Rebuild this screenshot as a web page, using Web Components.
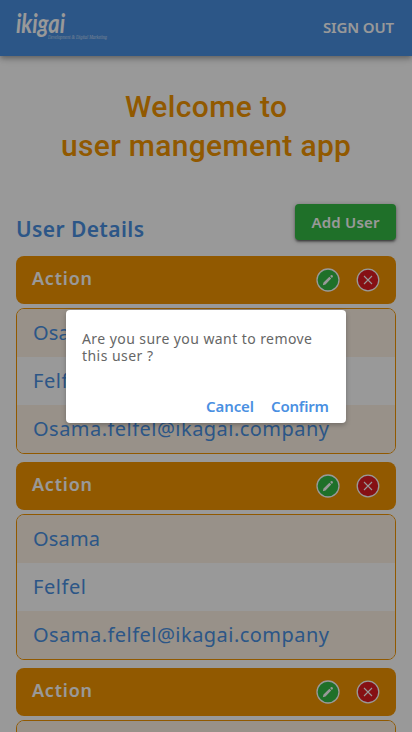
<!DOCTYPE html>
<html lang="en">
<head>
<meta charset="utf-8">
<meta name="viewport" content="width=device-width">
<title>User management</title>
<style>
html,body{margin:0;height:100%;overflow:hidden;background:#fff}
body{font-family:"Noto Sans","Open Sans",sans-serif;color:#4a90e2}
</style>
</head>
<body>
<user-app></user-app>
<script>
const define = (name, html, ready) => {
  const template = document.createElement('template');
  template.innerHTML = html;
  customElements.define(name, class extends HTMLElement {
    connectedCallback() {
      if (this.shadowRoot) return;
      this.attachShadow({mode: 'open'}).append(template.content.cloneNode(true));
      if (ready) ready(this);
    }
  });
};

// Spreads a line of text over a given width with letter-spacing.
define('spaced-text', `<style>:host{display:inline-block;white-space:nowrap}span{display:inline-block}</style><span><slot></slot></span>`, el => {
  const span = el.shadowRoot.querySelector('span');
  span.style.letterSpacing = '0';
  const natural = span.getBoundingClientRect().width;
  const gap = (Number(el.getAttribute('width')) - natural) / (el.textContent.length - 1);
  span.style.letterSpacing = gap.toFixed(3) + 'px';
  span.style.marginRight = (-gap).toFixed(3) + 'px';
});

define('brand-logo', `<style>
:host{display:block;width:94px;height:36px}
svg{display:block;overflow:visible}
text{font-family:"Lato","Open Sans",sans-serif;font-style:italic;fill:#fff}
.tag{font-family:"Liberation Serif",serif}
</style>
<svg width="94" height="36" viewBox="0 0 94 36">
<text x="0" y="23" font-size="27" font-weight="700" textLength="49" lengthAdjust="spacingAndGlyphs">ikigai</text>
<text class="tag" x="32" y="29" font-size="5.5" opacity=".65" textLength="59" lengthAdjust="spacingAndGlyphs">Development &amp; Digital Marketing</text>
</svg>`);

define('app-header', `<style>
:host{display:flex;justify-content:space-between;align-items:center;height:56px;box-sizing:border-box;padding:0 18px 0 16px;background:#4a90e2;color:#fff;box-shadow:0 2px 4px -1px rgba(0,0,0,.2),0 4px 5px rgba(0,0,0,.14),0 1px 10px rgba(0,0,0,.12)}
.out{font-size:15px;font-weight:600;line-height:20px;padding-bottom:2px}
</style><brand-logo></brand-logo><spaced-text class="out" width="71">SIGN OUT</spaced-text>`);

define('page-title', `<style>
:host{display:flex;flex-direction:column;align-items:center;padding-top:31px;font:500 30px/39px Roboto,sans-serif;color:#f29400}
</style><spaced-text width="162">Welcome to</spaced-text><spaced-text width="290">user mangement app</spaced-text>`);

define('raised-button', `<style>
:host{display:flex;align-items:center;justify-content:center;width:101px;height:36px;box-sizing:border-box;padding-bottom:1px;border-radius:4px;background:#34bb45;color:#fff;font-size:15px;font-weight:600;line-height:20px;box-shadow:0 3px 1px -2px rgba(0,0,0,.2),0 2px 2px rgba(0,0,0,.3),0 1px 5px rgba(0,0,0,.3)}
</style><slot></slot>`);

define('round-icon', `<style>
:host{display:block;width:24px;height:24px}svg{display:block}
:host([kind=edit]) .remove,:host([kind=remove]) .edit{display:none}
</style>
<svg width="24" height="24" viewBox="0 0 24 24">
<g class="edit"><circle cx="12" cy="12" r="11" fill="#34bb45" stroke="#fff" stroke-width="1.3"/>
<path d="M6.8 17.2 7.5 14.4 13.4 8.8 15.2 10.6 9.5 16.4Z M14.1 8.1 15 7.2Q15.7 6.7 16.3 7.2L16.8 7.7Q17.2 8.3 16.7 9L15.9 9.9Z" fill="#fff"/></g>
<g class="remove"><circle cx="12" cy="12" r="10.8" fill="#e01b22" stroke="#fff" stroke-width="1.3"/>
<path d="M8 8 16 16M16 8 8 16" fill="none" stroke="#fff" stroke-width="1.1"/></g>
</svg>`);

define('user-card', `<style>
:host{display:flex;flex-direction:column;gap:4px}
.bar{display:flex;align-items:center;justify-content:space-between;height:48px;box-sizing:border-box;padding:0 16px;border-radius:8px;background:#f29400;color:#fff;font-size:18px;font-weight:600;line-height:24px}
.bar spaced-text{padding-bottom:4px}
.icons{display:flex;gap:16px}
.rows{border:1px solid #f29400;border-radius:8px;overflow:hidden;font-size:20px}
.row{height:48px;box-sizing:border-box;padding:0 16px;line-height:47px}
.row:nth-child(odd){background:#fdf2e4}
</style>
<div class="bar"><spaced-text width="60">Action</spaced-text><div class="icons"><round-icon kind="edit"></round-icon><round-icon kind="remove"></round-icon></div></div>
<div class="rows">
<div class="row"><spaced-text width="67">Osama</spaced-text></div>
<div class="row"><spaced-text width="53">Felfel</spaced-text></div>
<div class="row"><spaced-text width="296">Osama.felfel@ikagai.company</spaced-text></div>
</div>`);

define('confirm-dialog', `<style>
:host{display:flex;flex-direction:column;justify-content:space-between;box-sizing:border-box;width:280px;height:113px;padding:20px 17px 7px 16px;border-radius:4px;background:#fff;color:#666;box-shadow:0 2px 5px rgba(0,0,0,.25)}
.message{display:flex;flex-direction:column;align-items:flex-start;font-size:14px;line-height:17px}
.actions{display:flex;justify-content:flex-end;gap:17px;color:#4a90e2;font-size:15px;font-weight:600;line-height:20px}
</style>
<div class="message"><spaced-text width="230">Are you sure you want to remove</spaced-text><spaced-text width="71">this user ?</spaced-text></div>
<div class="actions"><spaced-text width="48">Cancel</spaced-text><spaced-text width="58">Confirm</spaced-text></div>`);

define('user-app', `<style>
:host{display:block;position:relative;height:732px;overflow:hidden;background:#fff}
.top{display:flex;justify-content:space-between;align-items:flex-start;padding:39px 16px 16px;height:36px}
h2{margin:0;padding-top:11px;font-size:21px;font-weight:600;line-height:28px}
.list{display:flex;flex-direction:column;gap:8px;padding:0 16px}
.overlay{position:absolute;inset:0;display:flex;align-items:center;justify-content:center;background:rgba(0,0,0,.4)}
</style>
<app-header></app-header>
<page-title></page-title>
<div class="top"><h2><spaced-text width="128">User Details</spaced-text></h2><raised-button><spaced-text width="68">Add User</spaced-text></raised-button></div>
<div class="list"><user-card></user-card><user-card></user-card><user-card></user-card></div>
<div class="overlay"><confirm-dialog></confirm-dialog></div>`);
</script>
</body>
</html>
